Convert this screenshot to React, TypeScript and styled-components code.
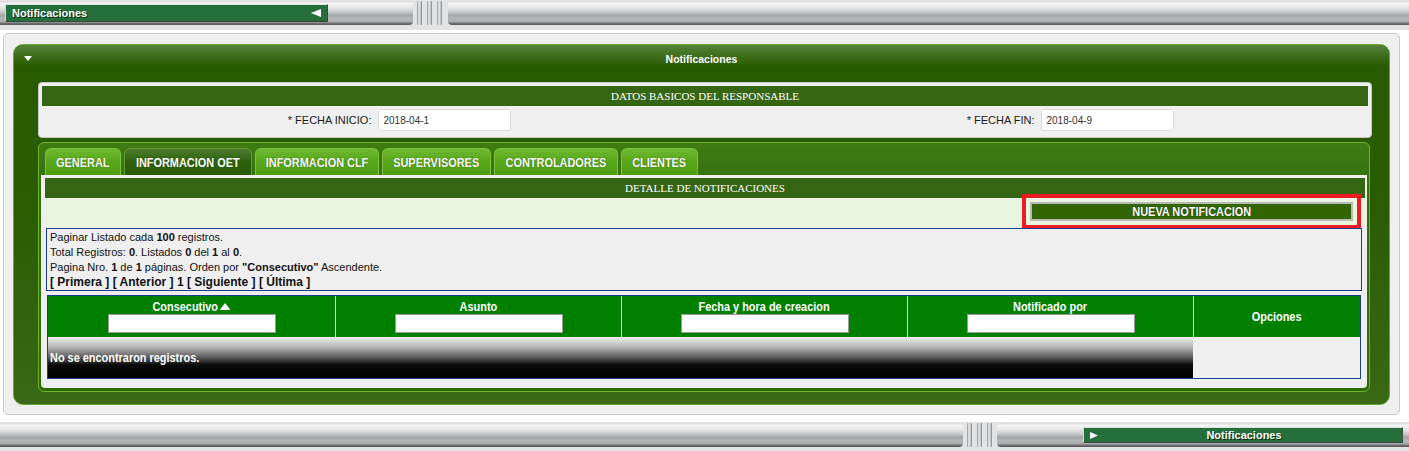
import React from "react";
import styled, { createGlobalStyle } from "styled-components";

const SANS = `"Liberation Sans", Arial, sans-serif`;
const SERIF = `"Liberation Serif", "Times New Roman", serif`;

const GlobalStyle = createGlobalStyle`
  html, body { margin: 0; padding: 0; background: #fff; }
  body {
    font-family: ${SANS};
    font-size: 11px;
    color: #000;
    width: 1409px;
    height: 451px;
    overflow: hidden;
  }
  * { box-sizing: border-box; }
`;

/* Arial Narrow look: bold sans compressed horizontally */
const Narrow = styled.span<{ $origin?: string }>`
  display: inline-block;
  font-family: ${SANS};
  font-weight: bold;
  font-size: 13px;
  white-space: nowrap;
  transform: scaleX(0.84);
  transform-origin: ${(p) => p.$origin || "center"};
`;

const pipeGradient = `linear-gradient(to bottom, #d6d7d8 0%, #f5f5f5 10%, #e8e8e9 26%, #c9cacb 44%, #a4a6a8 60%, #b6b7b8 74%, #a9aaab 86%, #6a6a6a 94%, #5a5a5a 100%)`;

const Frame = styled.div<{ $height: number }>`
  height: ${(p) => p.$height}px;
  background: #e1e3e4;
  padding-top: 1px;
`;

const PipeRow = styled.div`
  display: flex;
  height: 24px;
`;

const Pipe = styled.div<{ $width?: number; $roundLeft?: boolean; $roundRight?: boolean; $gap?: number; $end?: boolean }>`
  ${(p) => (p.$width ? `width: ${p.$width}px; flex: none;` : `flex: 1;`)}
  margin-left: ${(p) => p.$gap || 0}px;
  height: 24px;
  background: ${pipeGradient};
  border-radius: ${(p) => (p.$roundLeft ? 4 : 0)}px ${(p) => (p.$roundRight ? 4 : 0)}px
    ${(p) => (p.$roundRight ? 4 : 0)}px ${(p) => (p.$roundLeft ? 4 : 0)}px;
  display: flex;
  align-items: flex-start;
  justify-content: ${(p) => (p.$end ? "flex-end" : "flex-start")};
`;

const Grip = styled.div<{ $gap: number }>`
  width: 5px;
  height: 24px;
  flex: none;
  margin-left: ${(p) => p.$gap}px;
  background: linear-gradient(to right, #8e8f90 0%, #eeeeee 40%, #c4c5c6 70%, #7a7b7c 100%);
  border-radius: 1px;
`;

const BarLabel = styled.div<{ $top: number; $height: number; $left: number; $right: number; $width: number }>`
  margin: ${(p) => p.$top}px ${(p) => p.$right}px 0 ${(p) => p.$left}px;
  width: ${(p) => p.$width}px;
  height: ${(p) => p.$height}px;
  background: #25703a;
  border-top: 1px solid #dfe6e0;
  border-left: 1px solid #cfd8d1;
  border-bottom: 1px solid #3a4a3e;
  border-right: 1px solid #3a4a3e;
  display: flex;
  align-items: center;
  padding: 0 6px;
  color: #fff;
  font-family: ${SANS};
  font-weight: bold;
  font-size: 11px;
  text-shadow: 1px 1px 0 #0b2a12;
  gap: 6px;
`;

const BarTitle = styled.span<{ $center?: boolean }>`
  flex: 1;
  text-align: ${(p) => (p.$center ? "center" : "left")};
  padding-right: ${(p) => (p.$center ? 12 : 0)}px;
`;

const Main = styled.div`
  padding: 3px 9px 0 3px;
  height: 392px;
`;

const OuterPanel = styled.div`
  height: 382px;
  background: #efefef;
  border: 1px solid #c9c9c9;
  border-radius: 5px;
  padding: 10px 9px 9px 9px;
`;

const GreenPanel = styled.div`
  height: 361px;
  border: 1px solid #66a536;
  border-radius: 10px;
  background: linear-gradient(to bottom, #285a00 0%, #2a5c02 45%, #3a6815 100%);
  display: flex;
  flex-direction: column;
`;

const GreenHeader = styled.div`
  height: 27px;
  flex: none;
  border-radius: 9px 9px 0 0;
  background: linear-gradient(to bottom, #57833a 0%, #3f6e1c 40%, #295b00 80%, #285a00 100%);
  display: grid;
  grid-template-columns: 1fr auto 1fr;
  align-items: center;
  color: #fff;
  font-family: ${SANS};
  font-weight: bold;
  font-size: 10.5px;
`;

const HeaderToggle = styled.span`
  justify-self: start;
  padding-left: 10px;
  display: flex;
`;

const GreenBody = styled.div`
  padding: 10px 17px 0 24px;
  display: flex;
  flex-direction: column;
`;

const DatosBox = styled.div`
  height: 56px;
  background: #efefef;
  border: 1px solid #c9c9c9;
  border-radius: 4px;
  padding: 3px;
`;

const SectionBar = styled.div`
  height: 20px;
  background: #366614;
  color: #fff;
  font-family: ${SERIF};
  font-size: 11px;
  line-height: 20px;
  text-align: center;
`;

const FieldRow = styled.div`
  height: 28px;
  display: grid;
  grid-template-columns: repeat(4, 1fr);
  align-items: center;
`;

const FieldLabel = styled.label`
  text-align: right;
  padding-right: 2px;
  font-family: ${SANS};
  font-size: 11px;
  color: #1a1a1a;
`;

const DateInput = styled.div`
  justify-self: start;
  margin-left: 4px;
  width: 133px;
  height: 22px;
  background: #fff;
  border: 1px solid #dcdcdc;
  border-radius: 3px;
  padding-left: 5px;
  display: flex;
  align-items: center;
  font-size: 10px;
  color: #333;
`;

const TabsContainer = styled.div`
  margin-top: 4px;
  margin-right: 2px;
  height: 250px;
  border: 1px solid #6db52a;
  border-radius: 6px;
  background: linear-gradient(to bottom, #3f7c13 0%, #336f0b 20%, #2f6a08 100%);
  padding: 5px 2px 3px 2px;
  display: flex;
  flex-direction: column;
`;

const TabList = styled.div`
  display: flex;
  gap: 3px;
  padding-left: 4px;
  height: 27px;
  flex: none;
`;

const Tab = styled.div<{ $active?: boolean; $w: number }>`
  width: ${(p) => p.$w}px;
  height: 27px;
  border: 1px solid ${(p) => (p.$active ? "#5f9a35" : "#7cc23e")};
  border-bottom: none;
  border-radius: 6px 6px 0 0;
  background: ${(p) =>
    p.$active
      ? "linear-gradient(to bottom, #4d7d2e 0%, #30620e 45%, #285a02 100%)"
      : "linear-gradient(to bottom, #70b932 0%, #5aa81a 45%, #4f9d12 100%)"};
  color: #fff;
  display: flex;
  justify-content: center;
  align-items: center;
  padding-top: 1px;
  text-shadow: 0 0 1px #1e4a00;
`;

const TabContent = styled.div`
  height: 213px;
  flex: none;
  background: #efefef;
  border-radius: 0 0 4px 4px;
  padding: 3px 2px 0 4px;
  display: flex;
  flex-direction: column;
`;

const ActionRow = styled.div`
  height: 29px;
  background: #eaf5e0;
  display: flex;
  justify-content: flex-end;
  padding: 4px 12px 0 0;
`;

const NewButton = styled.button`
  width: 323px;
  height: 19px;
  background: #336600;
  border: 2px solid #b9b9b9;
  color: #fff;
  padding: 0;
  display: flex;
  justify-content: center;
  align-items: center;
  text-shadow: 0 0 1px #0d2400;
  outline: 4px solid #ed1c24;
  outline-offset: 4px;
`;

const InfoBox = styled.div`
  margin: 1px 3px 0 1px;
  height: 63px;
  border: 1px solid #1b3f8b;
  padding: 1px 3px;
  font-family: ${SANS};
  font-size: 11px;
  line-height: 15px;
  color: #111;
`;

const InfoLine = styled.div``;

const PagerLine = styled.div`
  font-weight: bold;
  font-size: 12px;
  color: #111;
`;

const Grid = styled.table`
  margin: 4px 4px 0 2px;
  width: calc(100% - 6px);
  border: 1px solid #1b3f8b;
  border-collapse: separate;
  border-spacing: 0;
  table-layout: fixed;
`;

const HeadCell = styled.th<{ $middle?: boolean }>`
  height: 41px;
  background: #008000;
  color: #fff;
  line-height: 15px;
  text-align: center;
  vertical-align: ${(p) => (p.$middle ? "middle" : "top")};
  padding: ${(p) => (p.$middle ? "0" : "3px 0 0 0")};
  border-left: 1px solid #e8f0e8;
  &:first-child { border-left: none; }
`;

const HeadTitle = styled.div`
  height: 15px;
  display: flex;
  justify-content: center;
  align-items: center;
`;

const FilterInput = styled.div`
  width: 168px;
  height: 19px;
  margin: 0 auto;
  background: #fff;
  border: 1px solid #9a9a9a;
`;

const EmptyCell = styled.td`
  height: 41px;
  background: linear-gradient(to bottom, #efefef 0%, #b4b4b4 25%, #5a5a5a 50%, #0a0a0a 68%, #000 100%);
  color: #fff;
  padding: 0 0 0 2px;
  vertical-align: middle;
`;

const OptionsCell = styled.td`
  background: #efefef;
  border-left: 1px solid #efefef;
`;

const SortIcon = styled.svg`
  margin-left: 2px;
  vertical-align: 1px;
`;

const DownTriangle = () => (
  <svg width="8" height="5" viewBox="0 0 8 5">
    <polygon points="0,0 8,0 4,5" fill="#fff" />
  </svg>
);

const LeftTriangle = () => (
  <svg width="10" height="8" viewBox="0 0 10 8">
    <polygon points="0,4 10,0 10,8" fill="#fff" />
  </svg>
);

const RightTriangle = () => (
  <svg width="8" height="7" viewBox="0 0 8 7">
    <polygon points="0,0 8,3.5 0,7" fill="#fff" />
  </svg>
);

const SortUp = () => (
  <SortIcon width="13" height="7" viewBox="0 0 13 7">
    <polygon points="0,7 13,7 6.5,0" fill="#fff" />
  </SortIcon>
);

const tabs: { label: string; w: number }[] = [
  { label: "GENERAL", w: 76 },
  { label: "INFORMACION OET", w: 128 },
  { label: "INFORMACION CLF", w: 124 },
  { label: "SUPERVISORES", w: 109 },
  { label: "CONTROLADORES", w: 124 },
  { label: "CLIENTES", w: 77 },
];

const columns = ["Consecutivo", "Asunto", "Fecha y hora de creacion", "Notificado por"];

export default function App() {
  return (
    <>
      <GlobalStyle />
      <Frame $height={30}>
        <PipeRow>
          <Pipe $width={413} $roundRight>
            <BarLabel $top={3} $height={18} $left={5} $right={0} $width={323}>
              <BarTitle>Notificaciones</BarTitle>
              <LeftTriangle />
            </BarLabel>
          </Pipe>
          <Grip $gap={4} />
          <Grip $gap={5} />
          <Grip $gap={5} />
          <Pipe $roundLeft $gap={6} />
        </PipeRow>
      </Frame>

      <Main>
        <OuterPanel>
          <GreenPanel>
            <GreenHeader>
              <HeaderToggle>
                <DownTriangle />
              </HeaderToggle>
              <span>Notificaciones</span>
              <span />
            </GreenHeader>
            <GreenBody>
              <DatosBox>
                <SectionBar>DATOS BASICOS DEL RESPONSABLE</SectionBar>
                <FieldRow>
                  <FieldLabel>* FECHA INICIO:</FieldLabel>
                  <DateInput>2018-04-1</DateInput>
                  <FieldLabel>* FECHA FIN:</FieldLabel>
                  <DateInput>2018-04-9</DateInput>
                </FieldRow>
              </DatosBox>

              <TabsContainer>
                <TabList>
                  {tabs.map((t) => (
                    <Tab key={t.label} $w={t.w} $active={t.label === "INFORMACION OET"}>
                      <Narrow>{t.label}</Narrow>
                    </Tab>
                  ))}
                </TabList>
                <TabContent>
                  <SectionBar>DETALLE DE NOTIFICACIONES</SectionBar>
                  <ActionRow>
                    <NewButton>
                      <Narrow>NUEVA NOTIFICACION</Narrow>
                    </NewButton>
                  </ActionRow>
                  <InfoBox>
                    <InfoLine>
                      Paginar Listado cada <b>100</b> registros.
                    </InfoLine>
                    <InfoLine>
                      Total Registros: <b>0</b>. Listados <b>0</b> del <b>1</b> al <b>0</b>.
                    </InfoLine>
                    <InfoLine>
                      Pagina Nro. <b>1</b> de <b>1</b> páginas. Orden por <b>"Consecutivo"</b> Ascendente.
                    </InfoLine>
                    <PagerLine>[ Primera ] [ Anterior ] 1 [ Siguiente ] [ Última ]</PagerLine>
                  </InfoBox>
                  <Grid>
                    <colgroup>
                      <col style={{ width: 287 }} />
                      <col style={{ width: 286 }} />
                      <col style={{ width: 286 }} />
                      <col style={{ width: 286 }} />
                      <col />
                    </colgroup>
                    <thead>
                      <tr>
                        {columns.map((c, i) => (
                          <HeadCell key={c}>
                            <HeadTitle>
                              <Narrow>
                                {c}
                                {i === 0 && <SortUp />}
                              </Narrow>
                            </HeadTitle>
                            <FilterInput />
                          </HeadCell>
                        ))}
                        <HeadCell $middle>
                          <Narrow>Opciones</Narrow>
                        </HeadCell>
                      </tr>
                    </thead>
                    <tbody>
                      <tr>
                        <EmptyCell colSpan={4}>
                          <Narrow $origin="left">No se encontraron registros.</Narrow>
                        </EmptyCell>
                        <OptionsCell />
                      </tr>
                    </tbody>
                  </Grid>
                </TabContent>
              </TabsContainer>
            </GreenBody>
          </GreenPanel>
        </OuterPanel>
      </Main>

      <Frame $height={29}>
        <PipeRow>
          <Pipe $width={963} $roundRight />
          <Grip $gap={4} />
          <Grip $gap={5} />
          <Grip $gap={5} />
          <Pipe $roundLeft $gap={5} $end>
            <BarLabel $top={4} $height={16} $left={0} $right={6} $width={320}>
              <RightTriangle />
              <BarTitle $center>Notificaciones</BarTitle>
            </BarLabel>
          </Pipe>
        </PipeRow>
      </Frame>
    </>
  );
}
